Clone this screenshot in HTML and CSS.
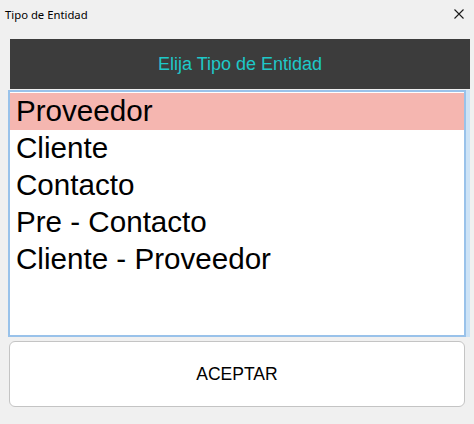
FILE: index.html
```html
<!DOCTYPE html>
<html lang="es">
<head>
<meta charset="utf-8">
<title>Tipo de Entidad</title>
<link rel="stylesheet" href="styles.css">
</head>
<body>
<div class="window">
  <div class="titlebar">
    <span class="title">Tipo de Entidad</span>
    <svg class="close" width="10" height="10" viewBox="0 0 10 10"><path d="M0.5 0.5 L9.5 9.5 M9.5 0.5 L0.5 9.5" stroke="#1a1a1a" stroke-width="1.1" fill="none"/></svg>
  </div>
  <div class="header">Elija Tipo de Entidad</div>
  <ul class="list">
    <li class="item selected">Proveedor</li>
    <li class="item">Cliente</li>
    <li class="item">Contacto</li>
    <li class="item">Pre - Contacto</li>
    <li class="item">Cliente - Proveedor</li>
  </ul>
  <button class="btn">ACEPTAR</button>
</div>
</body>
</html>
```
FILE: styles.css
```css
html, body {
  margin: 0;
  padding: 0;
  background: #f0f0f0;
}
.window {
  width: 474px;
  height: 424px;
  display: flex;
  flex-direction: column;
  font-family: "Liberation Sans", Arial, sans-serif;
}
.titlebar {
  height: 30px;
  display: flex;
  align-items: center;
  justify-content: space-between;
  padding: 0 10px 0 5px;
  box-sizing: border-box;
}
.title {
  font-family: "Noto Sans", "Open Sans", sans-serif;
  font-size: 11.3px;
  color: #000;
  margin-top: -2px;
}
.close {
  margin-top: -2px;
}
.header {
  margin: 9px 0 0 10px;
  width: 460px;
  height: 50px;
  background: #3c3c3c;
  color: #1ec8c8;
  font-size: 18px;
  display: flex;
  align-items: center;
  justify-content: center;
}
.list {
  list-style: none;
  margin: 1px 0 0 8px;
  padding: 1px 0 0 0;
  width: 458px;
  height: 247px;
  box-sizing: border-box;
  border: 2px solid #99c2ea;
  background: #fff;
  box-shadow: 4px 0 0 #cde3f6;
}
.item {
  height: 37px;
  line-height: 35px;
  padding-bottom: 2px;
  box-sizing: border-box;
  font-size: 29.6px;
  padding-left: 6px;
  color: #000;
}
.selected {
  background: #f5b6b0;
}
.btn {
  margin: 4px 0 0 9px;
  width: 456px;
  height: 66px;
  background: #fff;
  border: 1px solid #c4c4c4;
  border-radius: 6px;
  font-family: "Liberation Sans", Arial, sans-serif;
  font-size: 17.5px;
  color: #000;
  padding: 0;
}
```
